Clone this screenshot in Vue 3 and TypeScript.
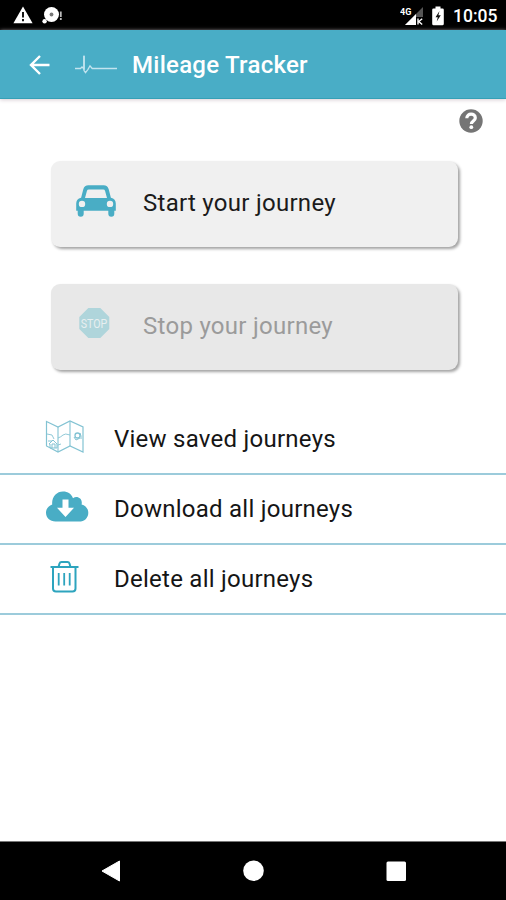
<script setup lang="ts">
interface MenuItem {
  id: 'view' | 'download' | 'delete'
  label: string
}

const menu: MenuItem[] = [
  { id: 'view', label: 'View saved journeys' },
  { id: 'download', label: 'Download all journeys' },
  { id: 'delete', label: 'Delete all journeys' },
]
</script>

<template>
  <div class="screen">
    <div class="status">
      <svg class="warn" width="20" height="18" viewBox="0 0 20 18">
        <path d="M10 0.5L19.6 17.3H0.4z" fill="#fff" />
        <path d="M10 6v5.6M10 13v2.2" stroke="#000" stroke-width="1.8" />
      </svg>
      <svg class="disc" width="21" height="18" viewBox="0 0 21 18">
        <circle cx="9.5" cy="8.5" r="7.500" fill="#fff" />
        <circle cx="2.600" cy="15.300" r="2.200" fill="#fff" />
        <circle cx="9.500" cy="8.500" r="1.900" fill="#777" />
        <path d="M18.800 5.500v5.500M18.800 12v2" stroke="#bbb" stroke-width="1.800" />
      </svg>
      <span class="grow"></span>
      <svg class="signal" width="25" height="20" viewBox="0 0 25 20">
        <path d="M23 1v18H5z" fill="#555" />
        <path d="M16 8v11H5z" fill="#fff" />
        <path d="M16 11h8v9h-8z" fill="#000" />
        <path d="M18 12.500v6M22.200 12.700L18.800 15.500l3.400 3" stroke="#fff" stroke-width="1.400" fill="none" />
        <text x="0" y="8.500" class="net">4G</text>
      </svg>
      <svg class="battery" width="12" height="20" viewBox="0 0 12 20">
        <path d="M3.500 0.500h5v2h2q1.300 0 1.300 1.300v14q0 1.500-1.400 1.500H1.600q-1.400 0-1.400-1.500v-14q0-1.300 1.300-1.300h2z" fill="#fff" />
        <path d="M7.500 5L3.500 11.200h2.300L4.700 15.500 8.800 9.300H6.400z" fill="#111" />
      </svg>
      <span class="clock">10:05</span>
    </div>

    <header class="bar">
      <svg class="back" width="22" height="22" viewBox="0 0 22 22">
        <path d="M20.500 11H2.500M11 2L2 11l9 9" fill="none" stroke="#fff" stroke-width="2.400" />
      </svg>
      <svg class="pulse" width="42" height="20" viewBox="0 0 42 20">
        <path d="M0 13.500h5.500l1.500-1.500 2 2V.800V15.500l1.500 2.200L13 14.300l2-3.500 2.200 2.700H42" fill="none" stroke="#c3e4ef" stroke-width="1.300" />
        <path d="M9 .800v14" stroke="#c3e4ef" stroke-width="1.600" />
      </svg>
      <h1>Mileage Tracker</h1>
    </header>

    <main>
      <div class="help">
        <svg width="24" height="24" viewBox="0 0 24 24">
          <circle cx="12" cy="12" r="11.700" fill="#757575" />
          <path d="M7.800 9.300C7.800 3.600 16.400 3.800 16.300 9c0 3-3.900 3.200-3.900 6" fill="none" stroke="#fff" stroke-width="3.200" />
          <circle cx="12.300" cy="18.200" r="1.900" fill="#fff" />
        </svg>
      </div>

      <button class="card" type="button">
        <svg width="40" height="32" viewBox="0 0 40 32">
          <path
            fill="#49adc5"
            fill-rule="evenodd"
            d="M12.500 .3h15q4.200 0 5.200 4l2.200 8.500q4.900 1.200 4.900 5.800v7.200h-1.500v2.700q0 3.300-3 3.300t-3-3.300v-2.700H7.700v2.700q0 3.300-3 3.300t-3-3.300v-2.700H.2v-7.200q0-4.600 4.900-5.800L7.300 4.300Q8.300.3 12.500 .3zM12.800 4.600q-1.500 0-1.900 1.400L9 13h22l-1.900-7Q28.700 4.600 27.200 4.600zM6 15.700a3.200 3.200 0 100 6.400 3.200 3.200 0 000-6.400zM34 15.700a3.200 3.200 0 100 6.400 3.200 3.200 0 000-6.400z"
          />
        </svg>
        <span>Start your journey</span>
      </button>

      <button class="card stopped" type="button" disabled>
        <svg width="40" height="32" viewBox="0 0 40 32">
          <path d="M12.300 1h12l9 9v12l-9 9h-12l-9-9v-12z" fill="#afd5db" />
          <text x="18" y="20.500" class="sign" textLength="26.500" lengthAdjust="spacingAndGlyphs">STOP</text>
        </svg>
        <span>Stop your journey</span>
      </button>

      <ul class="menu">
        <li v-for="item in menu" :key="item.id">
          <svg v-if="item.id === 'view'" width="44" height="34" viewBox="0 0 44 34" fill="none" stroke="#83c3d3">
            <path d="M1.500 1.500L13 7l12-6 13 6v25l-13-6-12 6-11.500-6z" stroke-width="1.200" />
            <path d="M13 7v25M25 1v25" stroke-width="1.100" />
            <path d="M2 14l5 1 2 4M13 18q3-1 5-3t7 0M13 25l3-1" stroke-width=".900" />
            <path d="M4 24l4-4 4 4v4H5v-4zM7 28v-4h3v4M3 21h4" stroke-width="1" />
            <circle cx="32.500" cy="15.500" r="2.500" stroke-width="1.300" />
            <path d="M35 13l1 3v3M29 17l2 3 4-2" stroke-width="1" />
          </svg>
          <svg v-else-if="item.id === 'download'" width="44" height="34" viewBox="0 0 44 34">
            <path d="M10.500 31.500C5 31.500 1 28 1 22.800c0-4 2.400-7 6.200-8.300C6.500 7 11.500 1.500 18 1.500c5 0 8.500 2.600 10 6.700 4.200-3 10 .500 8.600 6.200 4 1 6.700 4.300 6.700 8.300 0 5.300-3.800 8.800-9.300 8.800z" fill="#49adc5" />
            <path d="M17.500 9.500h6v8.300h5.500L20.500 27 12 17.800h5.500z" fill="#fff" />
          </svg>
          <svg v-else width="44" height="34" viewBox="0 0 44 34" fill="none" stroke="#2da4be">
            <path d="M5.500 7h28" stroke-width="2" />
            <path d="M13.500 7l1-3.500q.500-1.500 2-1.500h6q1.500 0 2 1.500l1 3.500M8 7v21.500q0 3 3 3h16.500q3 0 3-3V7" stroke-width="2" />
            <path d="M13.700 13v12.500M19.200 13v12.500M24.700 13v12.500" stroke-width="1.800" />
          </svg>
          <span>{{ item.label }}</span>
        </li>
      </ul>
    </main>

    <nav>
      <svg width="22" height="22" viewBox="0 0 22 22"><path d="M19.500 1v20L2 11z" fill="#fff" stroke="#fff" stroke-linejoin="round" /></svg>
      <svg width="22" height="22" viewBox="0 0 22 22"><circle cx="10.500" cy="10.800" r="10.300" fill="#fff" /></svg>
      <svg width="22" height="22" viewBox="0 0 22 22"><rect x="1.500" y="1.500" width="19.500" height="19.500" rx="1.500" fill="#fff" /></svg>
    </nav>
  </div>
</template>

<style>
body {
  margin: 0;
  background: #fff;
}
</style>

<style scoped>
.screen {
  width: 506px;
  height: 900px;
  display: flex;
  flex-direction: column;
  background: #fff;
  font-family: Roboto, "Liberation Sans", sans-serif;
  color: #151515;
  overflow: hidden;
}
svg {
  display: block;
  flex: none;
}
.status {
  box-sizing: border-box;
  height: 30px;
  padding: 6px 9px 0 13px;
  display: flex;
  align-items: flex-start;
  background: #000;
  color: #fff;
}
.disc {
  margin-left: 9px;
}
.grow {
  flex: 1;
}
.net {
  font: 700 9px Roboto, sans-serif;
  fill: #fff;
}
.battery {
  margin-left: 7px;
}
.clock {
  width: 44px;
  margin-left: 9px;
  font-size: 17.5px;
  line-height: 21px;
  font-weight: 500;
  white-space: nowrap;
}
.bar {
  box-sizing: border-box;
  height: 69px;
  padding: 2px 0 0 29px;
  display: flex;
  align-items: center;
  background: #49adc6;
  border-bottom: 1px solid #35a0b6;
  box-shadow: 0 1px 4px #d8cdd4;
  color: #fff;
}
.pulse {
  margin-left: 24px;
}
h1 {
  margin: 0 0 0 15px;
  font-size: 24px;
  line-height: 30px;
  font-weight: 500;
  letter-spacing: 0.27px;
  white-space: nowrap;
}
main {
  flex: 1;
}
.help {
  display: flex;
  justify-content: flex-end;
  padding: 10px 23px 28px 0;
}
.card {
  box-sizing: border-box;
  width: 407px;
  height: 86px;
  margin: 0 0 37px 51px;
  padding: 0 0 2px 25px;
  display: flex;
  align-items: center;
  gap: 27px;
  border: 0;
  border-radius: 9px;
  background: #f0f0f0;
  box-shadow: 2px 2px 3px #a3a3a3;
  font: 400 24px/30px Roboto, sans-serif;
  letter-spacing: 0.28px;
  color: #1b1b1b;
  text-align: left;
}
.card svg {
  margin-bottom: 5px;
}
.stopped {
  background: #e8e8e8;
  color: #9b9b9b;
}
.stopped svg {
  margin-bottom: 6px;
}
.sign {
  font: 400 13px Roboto, sans-serif;
  letter-spacing: 0;
  text-anchor: middle;
  fill: #e8eff0;
}
.menu {
  margin: -2px 0 0;
  padding: 0;
  list-style: none;
}
.menu li {
  box-sizing: border-box;
  height: 70px;
  padding-left: 45px;
  display: flex;
  align-items: center;
  gap: 25px;
  border-bottom: 2px solid #9ccbdb;
  font-size: 24px;
  line-height: 30px;
  letter-spacing: 0.25px;
}
.menu svg {
  margin-bottom: 4px;
}
nav {
  box-sizing: border-box;
  height: 59px;
  padding: 0 99px 0 100px;
  display: flex;
  align-items: center;
  justify-content: space-between;
  background: #000;
  border-top: 1px solid #777;
}
</style>
